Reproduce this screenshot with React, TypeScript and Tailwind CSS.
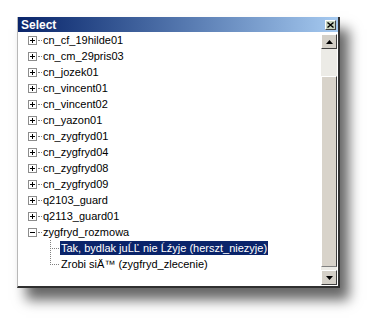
const roots = [
  "cn_cf_19hilde01",
  "cn_cm_29pris03",
  "cn_jozek01",
  "cn_vincent01",
  "cn_vincent02",
  "cn_yazon01",
  "cn_zygfryd01",
  "cn_zygfryd04",
  "cn_zygfryd08",
  "cn_zygfryd09",
  "q2103_guard",
  "q2113_guard01",
];

function Box({ open }: { open?: boolean }) {
  return (
    <div className="relative h-[9px] w-[9px] shrink-0 border border-[#8c8c8c] bg-white">
      <div className="absolute left-[1px] top-[3px] h-[1px] w-[5px] bg-black" />
      {!open && <div className="absolute left-[3px] top-[1px] h-[5px] w-[1px] bg-black" />}
    </div>
  );
}

function ArrowBtn({ down }: { down?: boolean }) {
  return (
    <div className="flex h-[15px] w-[16px] items-center justify-center border border-t-white border-l-white border-r-[#404040] border-b-[#404040] bg-[#d4d0c8]">
      <svg width="7" height="4" viewBox="0 0 7 4">
        {down ? <path d="M0 0h7L3.5 4z" fill="#000" /> : <path d="M0 4h7L3.5 0z" fill="#000" />}
      </svg>
    </div>
  );
}

export default function App() {
  return (
    <div className="h-[320px] w-[370px] overflow-hidden bg-white" style={{ fontFamily: "'Liberation Sans', Arial, sans-serif" }}>
      <div className="ml-[17px] mt-[17px] flex h-[271px] w-[323px] flex-col border-l border-[#b8b8b8] border-r-2 border-r-[#303030] border-b-2 border-b-[#303030] bg-white shadow-[9px_12px_12px_rgba(0,0,0,0.6)]">
        {/* Title bar */}
        <div className="flex h-[15px] items-center justify-between bg-gradient-to-r from-[#0a246a] to-[#a6caf0] pl-[3px] pr-[2px]">
          <span className="text-[12px] font-bold leading-none text-white">Select</span>
          <div className="flex h-[10px] w-[11px] items-center justify-center border border-t-white border-l-white border-r-[#404040] border-b-[#404040] bg-[#c8d4c0]">
            <svg width="7" height="6" viewBox="0 0 7 6">
              <path d="M0.5 0.5L6.5 5.5M6.5 0.5L0.5 5.5" stroke="#000" strokeWidth="1.4" />
            </svg>
          </div>
        </div>

        <div className="flex flex-1 flex-row">
          {/* Tree */}
          <div className="flex-1 pl-[10px] text-[11px] leading-[16px] text-black">
            {roots.map((r) => (
              <div key={r} className="flex h-[16px] items-center">
                <Box />
                <div className="mx-[1px] w-[4px] border-t border-dotted border-[#808080]" />
                <span>{r}</span>
              </div>
            ))}
            <div className="flex h-[16px] items-center">
              <Box open />
              <div className="mx-[1px] w-[4px] border-t border-dotted border-[#808080]" />
              <span>zygfryd_rozmowa</span>
            </div>
            <div className="relative">
              <div className="absolute left-[22px] top-0 h-[25px] border-l border-dotted border-[#808080]" />
              <div className="flex h-[16px] items-center pl-[22px]">
                <div className="w-[9px] border-t border-dotted border-[#808080]" />
                <span className="ml-[1px] bg-[#0a246a] px-[1px] leading-[14px] text-white">
                  Tak, bydlak juĹĽ nie Ĺźyje (herszt_niezyje)
                </span>
              </div>
              <div className="flex h-[16px] items-center pl-[22px]">
                <div className="w-[9px] border-t border-dotted border-[#808080]" />
                <span className="ml-[1px] px-[1px]">Zrobi siÄ™ (zygfryd_zlecenie)</span>
              </div>
            </div>
          </div>

          {/* Scrollbar */}
          <div className="mr-[1px] flex w-[16px] flex-col pt-[2px]">
            <ArrowBtn />
            <div className="h-[27px] bg-[#ecebe6]" />
            <div className="flex-1 border border-t-white border-l-white border-r-[#404040] border-b-[#808080] bg-[#d8d3ca]" />
            <div className="h-[3px] bg-[#ecebe6]" />
            <ArrowBtn down />
            <div className="h-[1px]" />
          </div>
        </div>
      </div>
    </div>
  );
}
